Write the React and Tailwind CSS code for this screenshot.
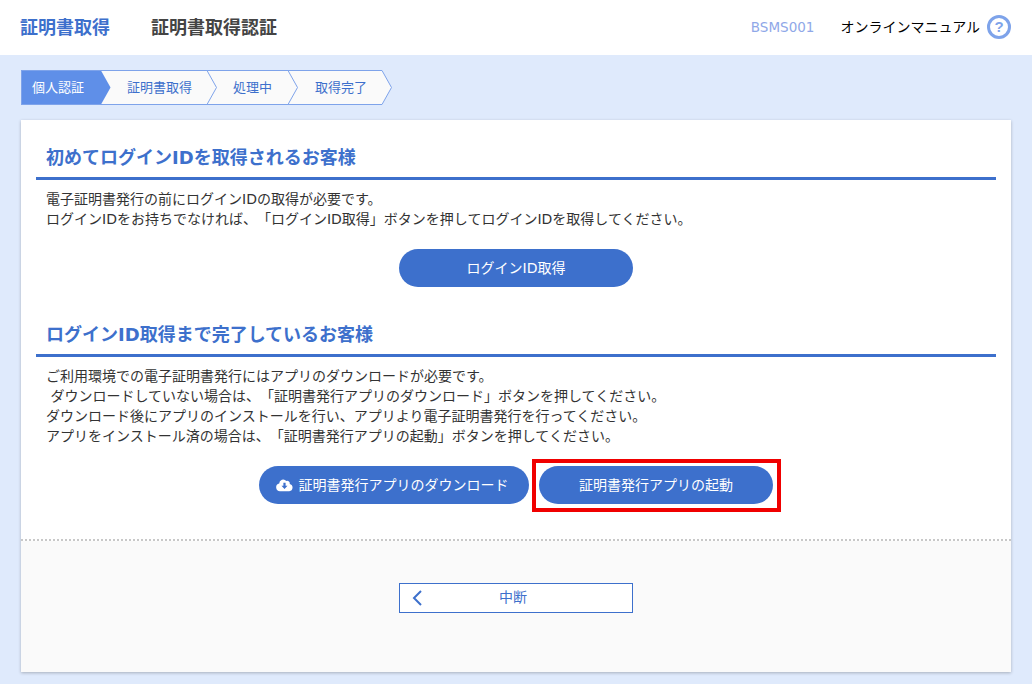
import React from 'react';

const steps = [
  { label: '個人認証', width: 'w-[80px]', pad: 'pl-[10px]', active: true },
  { label: '証明書取得', width: 'w-[106px]', pad: 'pl-[26px]' },
  { label: '処理中', width: 'w-[81px]', pad: 'pl-[26px]' },
  { label: '取得完了', width: 'w-[94px]', pad: 'pl-[27px]' },
];

const Step = ({ step }) => (
  <div className={`relative h-[35px] ${step.width} ${step.pad} ${step.active ? 'bg-[#5f8fe8] z-10 border border-r-0 border-[#7ea3ea]' : 'bg-[#fafafa] border-y border-[#7ea3ea]'} flex items-center text-[13px] ${step.active ? 'text-white' : 'text-[#3d70cc]'}`}>
    {step.label}
    <svg className="absolute left-full top-[-1px] z-10" width="10" height="35" viewBox="0 0 10 35">
      <path d="M0 0.5 L9.5 17.5 L0 34.5" fill={step.active ? '#5f8fe8' : '#fafafa'} stroke={step.active ? 'none' : '#7ea3ea'} />
    </svg>
  </div>
);

const PillButton = ({ children, className = '' }) => (
  <button className={`h-[38px] rounded-full bg-[#3d70cc] text-white text-sm flex items-center justify-center ${className}`}>
    {children}
  </button>
);

const SectionTitle = ({ children }) => (
  <h2 className="text-[18px] leading-[26px] font-bold text-[#3d70cc] pl-[10px] pt-[2px] pb-[6px] border-b-[3px] border-[#3d70cc]">
    {children}
  </h2>
);

export default function App() {
  return (
    <div className="w-[1032px] h-[684px] overflow-hidden bg-[#dfeafc] text-[#333] [text-spacing-trim:space-all] font-['DejaVu_Sans','Noto_Sans_CJK_JP',sans-serif]">
      <header className="h-[55px] bg-white flex items-center pl-[20px] pr-[21px] pb-[1px]">
        <div className="text-[18px] font-bold text-[#3d70cc]">証明書取得</div>
        <div className="ml-[41px] text-[18px] font-bold text-[#444]">証明書取得認証</div>
        <div className="ml-auto text-[13.5px] text-[#8fa8e8]">BSMS001</div>
        <div className="ml-[26px] text-sm text-black">オンラインマニュアル</div>
        <div className="ml-[7px] w-[24px] h-[24px] rounded-full border-[3px] border-[#7ea3ea] flex items-center justify-center text-[#7ea3ea] text-[15px] font-bold font-['Liberation_Sans',sans-serif]">?</div>
      </header>

      <div className="flex mt-[15px] ml-[21px]">
        {steps.map((step) => <Step key={step.label} step={step} />)}
      </div>

      <main className="mt-[15px] mx-[21px] h-[552px] bg-white shadow-[0_1px_3px_rgba(0,0,0,0.25)] flex flex-col">
        <div className="px-[15px] pt-[23px] h-[421px] border-b-2 border-dotted border-[#c8c8c8]">
          <SectionTitle>初めてログインIDを取得されるお客様</SectionTitle>
          <div className="pl-[10px] mt-[9px] text-sm leading-[20px]">
            <p>電子証明書発行の前にログインIDの取得が必要です。</p>
            <p>ログインIDをお持ちでなければ、「ログインID取得」ボタンを押してログインIDを取得してください。</p>
          </div>
          <div className="flex justify-center mt-[20px]">
            <PillButton className="w-[234px]">ログインID取得</PillButton>
          </div>

          <div className="mt-[33px]">
            <SectionTitle>ログインID取得まで完了しているお客様</SectionTitle>
          </div>
          <div className="pl-[10px] mt-[9px] text-sm leading-[20px]">
            <p>ご利用環境での電子証明書発行にはアプリのダウンロードが必要です。</p>
            <p>&nbsp;ダウンロードしていない場合は、「証明書発行アプリのダウンロード」ボタンを押してください。</p>
            <p>ダウンロード後にアプリのインストールを行い、アプリより電子証明書発行を行ってください。</p>
            <p>アプリをインストール済の場合は、「証明書発行アプリの起動」ボタンを押してください。</p>
          </div>
          <div className="flex justify-center gap-[10px] mt-[20px]">
            <PillButton className="w-[270px] gap-[6px] pr-[4px]">
              <svg width="17" height="14" viewBox="0 0 17 14">
                <path d="M13.7 6.1A2.6 2.6 0 0 0 10.3 3 4 4 0 0 0 3.2 5.5 3.9 3.9 0 0 0 4 13.2h9.3a3.6 3.6 0 0 0 .4-7.1z" fill="#fff" />
                <path d="M7.4 4.8h2.2v3h1.9L8.5 11 5.5 7.8h1.9z" fill="#3d70cc" />
              </svg>
              証明書発行アプリのダウンロード
            </PillButton>
            <div className="relative">
              <PillButton className="w-[234px]">証明書発行アプリの起動</PillButton>
              <div className="absolute left-[-7px] top-[-7px] w-[249px] h-[53px] border-4 border-[#f00000]" />
            </div>
          </div>
        </div>

        <div className="flex-1 bg-[#fafafa] flex justify-center pt-[42px]">
          <button className="relative w-[234px] h-[30px] bg-white border border-[#3d70cc] text-[#3d70cc] text-sm flex items-center justify-center pr-[6px] pb-[2px]">
            <svg className="absolute left-[12px] top-[6px]" width="11" height="16" viewBox="0 0 11 16">
              <path d="M9 1 L2 8 L9 15" fill="none" stroke="#3d70cc" strokeWidth="2" />
            </svg>
            中断
          </button>
        </div>
      </main>
    </div>
  );
}
